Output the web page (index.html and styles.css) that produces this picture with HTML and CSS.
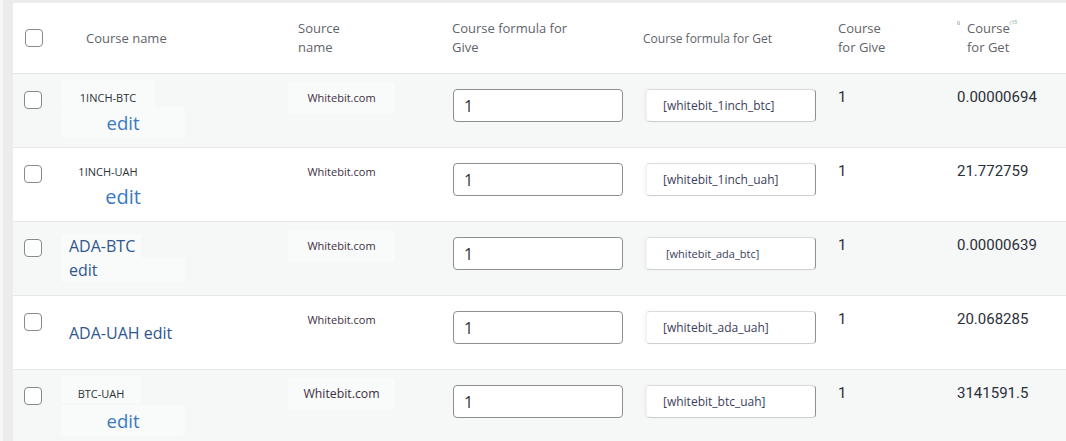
FILE: index.html
```html
<!DOCTYPE html>
<html lang="en">
<head>
<meta charset="utf-8">
<title>Courses</title>
<link rel="stylesheet" href="styles.css">
</head>
<body>
<div class="wrap">
  <div class="table">
    <div class="row head">
      <div class="c cb"><span class="check"></span></div>
      <div class="c h-name">Course name</div>
      <div class="c h-src">Source<br>name</div>
      <div class="c h-give">Course formula for<br>Give</div>
      <div class="c h-get">Course formula for Get</div>
      <div class="c h-cg">Course<br>for Give</div>
      <div class="c h-cget"><span class="ghost g1">⁽ⁱ</span>Course<span class="ghost g2">⁽¹⁵</span><br><span class="pad">for Get</span></div>
    </div>

    <div class="row odd">
      <div class="c cb"><span class="check"></span></div>
      <div class="c name"><div class="lbl tiny w94">1INCH-BTC</div><a class="edit e18" href="#">edit</a></div>
      <div class="c src"><span class="srcbox">Whitebit.com</span></div>
      <div class="c give"><input class="inp" type="text" value="1"></div>
      <div class="c get"><div class="inp2">[whitebit_1inch_btc]</div></div>
      <div class="c num">1</div>
      <div class="c val">0.00000694</div>
    </div>

    <div class="row">
      <div class="c cb"><span class="check"></span></div>
      <div class="c name"><div class="lbl tiny w94 sh">1INCH-UAH</div><a class="edit e20" href="#">edit</a></div>
      <div class="c src"><span class="srcbox">Whitebit.com</span></div>
      <div class="c give"><input class="inp" type="text" value="1"></div>
      <div class="c get"><div class="inp2">[whitebit_1inch_uah]</div></div>
      <div class="c num">1</div>
      <div class="c val">21.772759</div>
    </div>

    <div class="row odd">
      <div class="c cb"><span class="check"></span></div>
      <div class="c name"><div class="big b1">ADA-BTC</div><a class="big b2" href="#">edit</a></div>
      <div class="c src"><span class="srcbox">Whitebit.com</span></div>
      <div class="c give"><input class="inp" type="text" value="1"></div>
      <div class="c get"><div class="inp2 sm">[whitebit_ada_btc]</div></div>
      <div class="c num">1</div>
      <div class="c val">0.00000639</div>
    </div>

    <div class="row">
      <div class="c cb"><span class="check"></span></div>
      <div class="c name"><div class="big one">ADA-UAH <a href="#">edit</a></div></div>
      <div class="c src"><span class="srcbox">Whitebit.com</span></div>
      <div class="c give"><input class="inp" type="text" value="1"></div>
      <div class="c get"><div class="inp2">[whitebit_ada_uah]</div></div>
      <div class="c num">1</div>
      <div class="c val">20.068285</div>
    </div>

    <div class="row odd last">
      <div class="c cb"><span class="check"></span></div>
      <div class="c name"><div class="lbl tiny w80">BTC-UAH</div><a class="edit e18 lo" href="#">edit</a></div>
      <div class="c src"><span class="srcbox lg">Whitebit.com</span></div>
      <div class="c give"><input class="inp" type="text" value="1"></div>
      <div class="c get"><div class="inp2">[whitebit_btc_uah]</div></div>
      <div class="c num">1</div>
      <div class="c val">3141591.5</div>
    </div>
  </div>
</div>
</body>
</html>
```

FILE: styles.css
```css
* { box-sizing: border-box; }

html, body {
  margin: 0;
  height: 100%;
}

body {
  background: #f7f7f7;
  font-family: "Open Sans", "Noto Sans", sans-serif;
  overflow: hidden;
}

.wrap {
  margin-left: 3px;
  padding: 3px 0 0 10px;
  background: #ececec;
  min-height: 100%;
}

.table {
  background: #ffffff;
  min-height: 438px;
}

.row {
  display: grid;
  grid-template-columns: 48px 227px 154px 194px 192px 120px 1fr;
  height: 74px;
  border-bottom: 1px solid #e6e8e9;
  align-items: start;
}

.row.odd { background: #f6f7f7; }
.row.last { border-bottom: none; height: 71px; }

.row.head {
  height: 71px;
  border-bottom: 1px solid #e3e4e5;
  align-items: center;
  background: #fff;
  font-size: 13px;
  line-height: 19px;
  color: #5f646a;
}

.c { min-width: 0; }

/* checkbox */
.cb { padding: 17px 0 0 11px; }
.head .cb { padding: 0 0 0 12px; }
.check {
  display: block;
  width: 18px;
  height: 18px;
  border: 1.5px solid #868b91;
  border-radius: 4px;
  background: #fff;
}

/* header cells */
.h-name { padding-left: 25px; }
.h-src { padding-left: 10px; }
.h-give { padding-left: 10px; }
.h-get { padding-left: 7px; font-size: 12px; }
.h-cg { padding-left: 10px; }
.h-cget { padding-left: 9px; }
.h-cget .pad { padding-left: 10px; }
.ghost {
  font-size: 8px;
  color: #9aa4a8;
  vertical-align: top;
  line-height: 10px;
}
.g1 { display: inline-block; width: 10px; color: #6a7076; }
.g2 { color: #7fb3a8; }

/* course name cells */
.name a { text-decoration: none; }

.lbl {
  margin-top: 6px;
  height: 27px;
  padding-top: 10px;
  line-height: 15px;
  text-align: center;
  background: #f9fafa;
  border-radius: 3px;
}
.lbl.sh { background: transparent; }
.tiny { font-size: 11px; color: #2c3338; }
.w94 { width: 94px; }
.w80 { width: 80px; }

.edit {
  display: block;
  width: 124px;
  height: 31px;
  line-height: 31px;
  text-align: center;
  color: #3a7abf;
  background: #f9fafa;
  border-radius: 3px;
}
.row:not(.odd) .edit { background: transparent; }
.e18 { font-size: 18.5px; }
.e20 { font-size: 20px; }
.edit.lo { margin-top: 2px; }

.big {
  font-size: 16px;
  line-height: 24px;
  color: #30568f;
  padding-left: 8px;
}
.big a { color: #30568f; }
.b1 {
  display: block;
  margin-top: 12px;
  width: 80px;
  background: #f9fafa;
}
.b2 {
  display: block;
  width: 124px;
  background: #f9fafa;
}
.big.one { margin-top: 25px; }

/* source */
.src { padding-top: 8px; }
.srcbox {
  display: block;
  width: 107px;
  height: 32px;
  line-height: 32px;
  text-align: center;
  font-size: 11px;
  color: #3d2f3e;
  background: #f9fafa;
  border-radius: 3px;
}
.row:not(.odd) .srcbox { background: transparent; }
.srcbox.lg { font-size: 12.3px; }

/* inputs */
.give { padding: 15px 0 0 11px; }
.inp {
  display: block;
  width: 170px;
  height: 33px;
  margin: 0;
  padding: 0 10px;
  border: 1px solid #8c8f94;
  border-radius: 4px;
  background: #fff;
  font-family: "Open Sans", sans-serif;
  font-size: 16px;
  color: #2c3338;
  outline: none;
}

.get { padding: 15px 0 0 10px; }
.inp2 {
  width: 170px;
  height: 33px;
  padding-left: 16px;
  line-height: 31px;
  font-size: 12px;
  color: #3b3e5c;
  background: #fff;
  border: 1px solid #8c8f94;
  border-color: #dcdcdc #8c8f94 #cfcfcf #f1f1f1;
  border-radius: 4px;
  box-shadow: -2px 0 3px rgba(0,0,0,0.04);
}
.inp2.sm { font-size: 11px; padding-left: 19px; }

/* numbers */
.num, .val {
  font-family: Roboto, "Liberation Sans", sans-serif;
  font-size: 15px;
  line-height: 20px;
  color: #2b2f3a;
  padding-top: 13px;
}
.num { padding-left: 10px; }
.val { padding-left: 9px; }
```
